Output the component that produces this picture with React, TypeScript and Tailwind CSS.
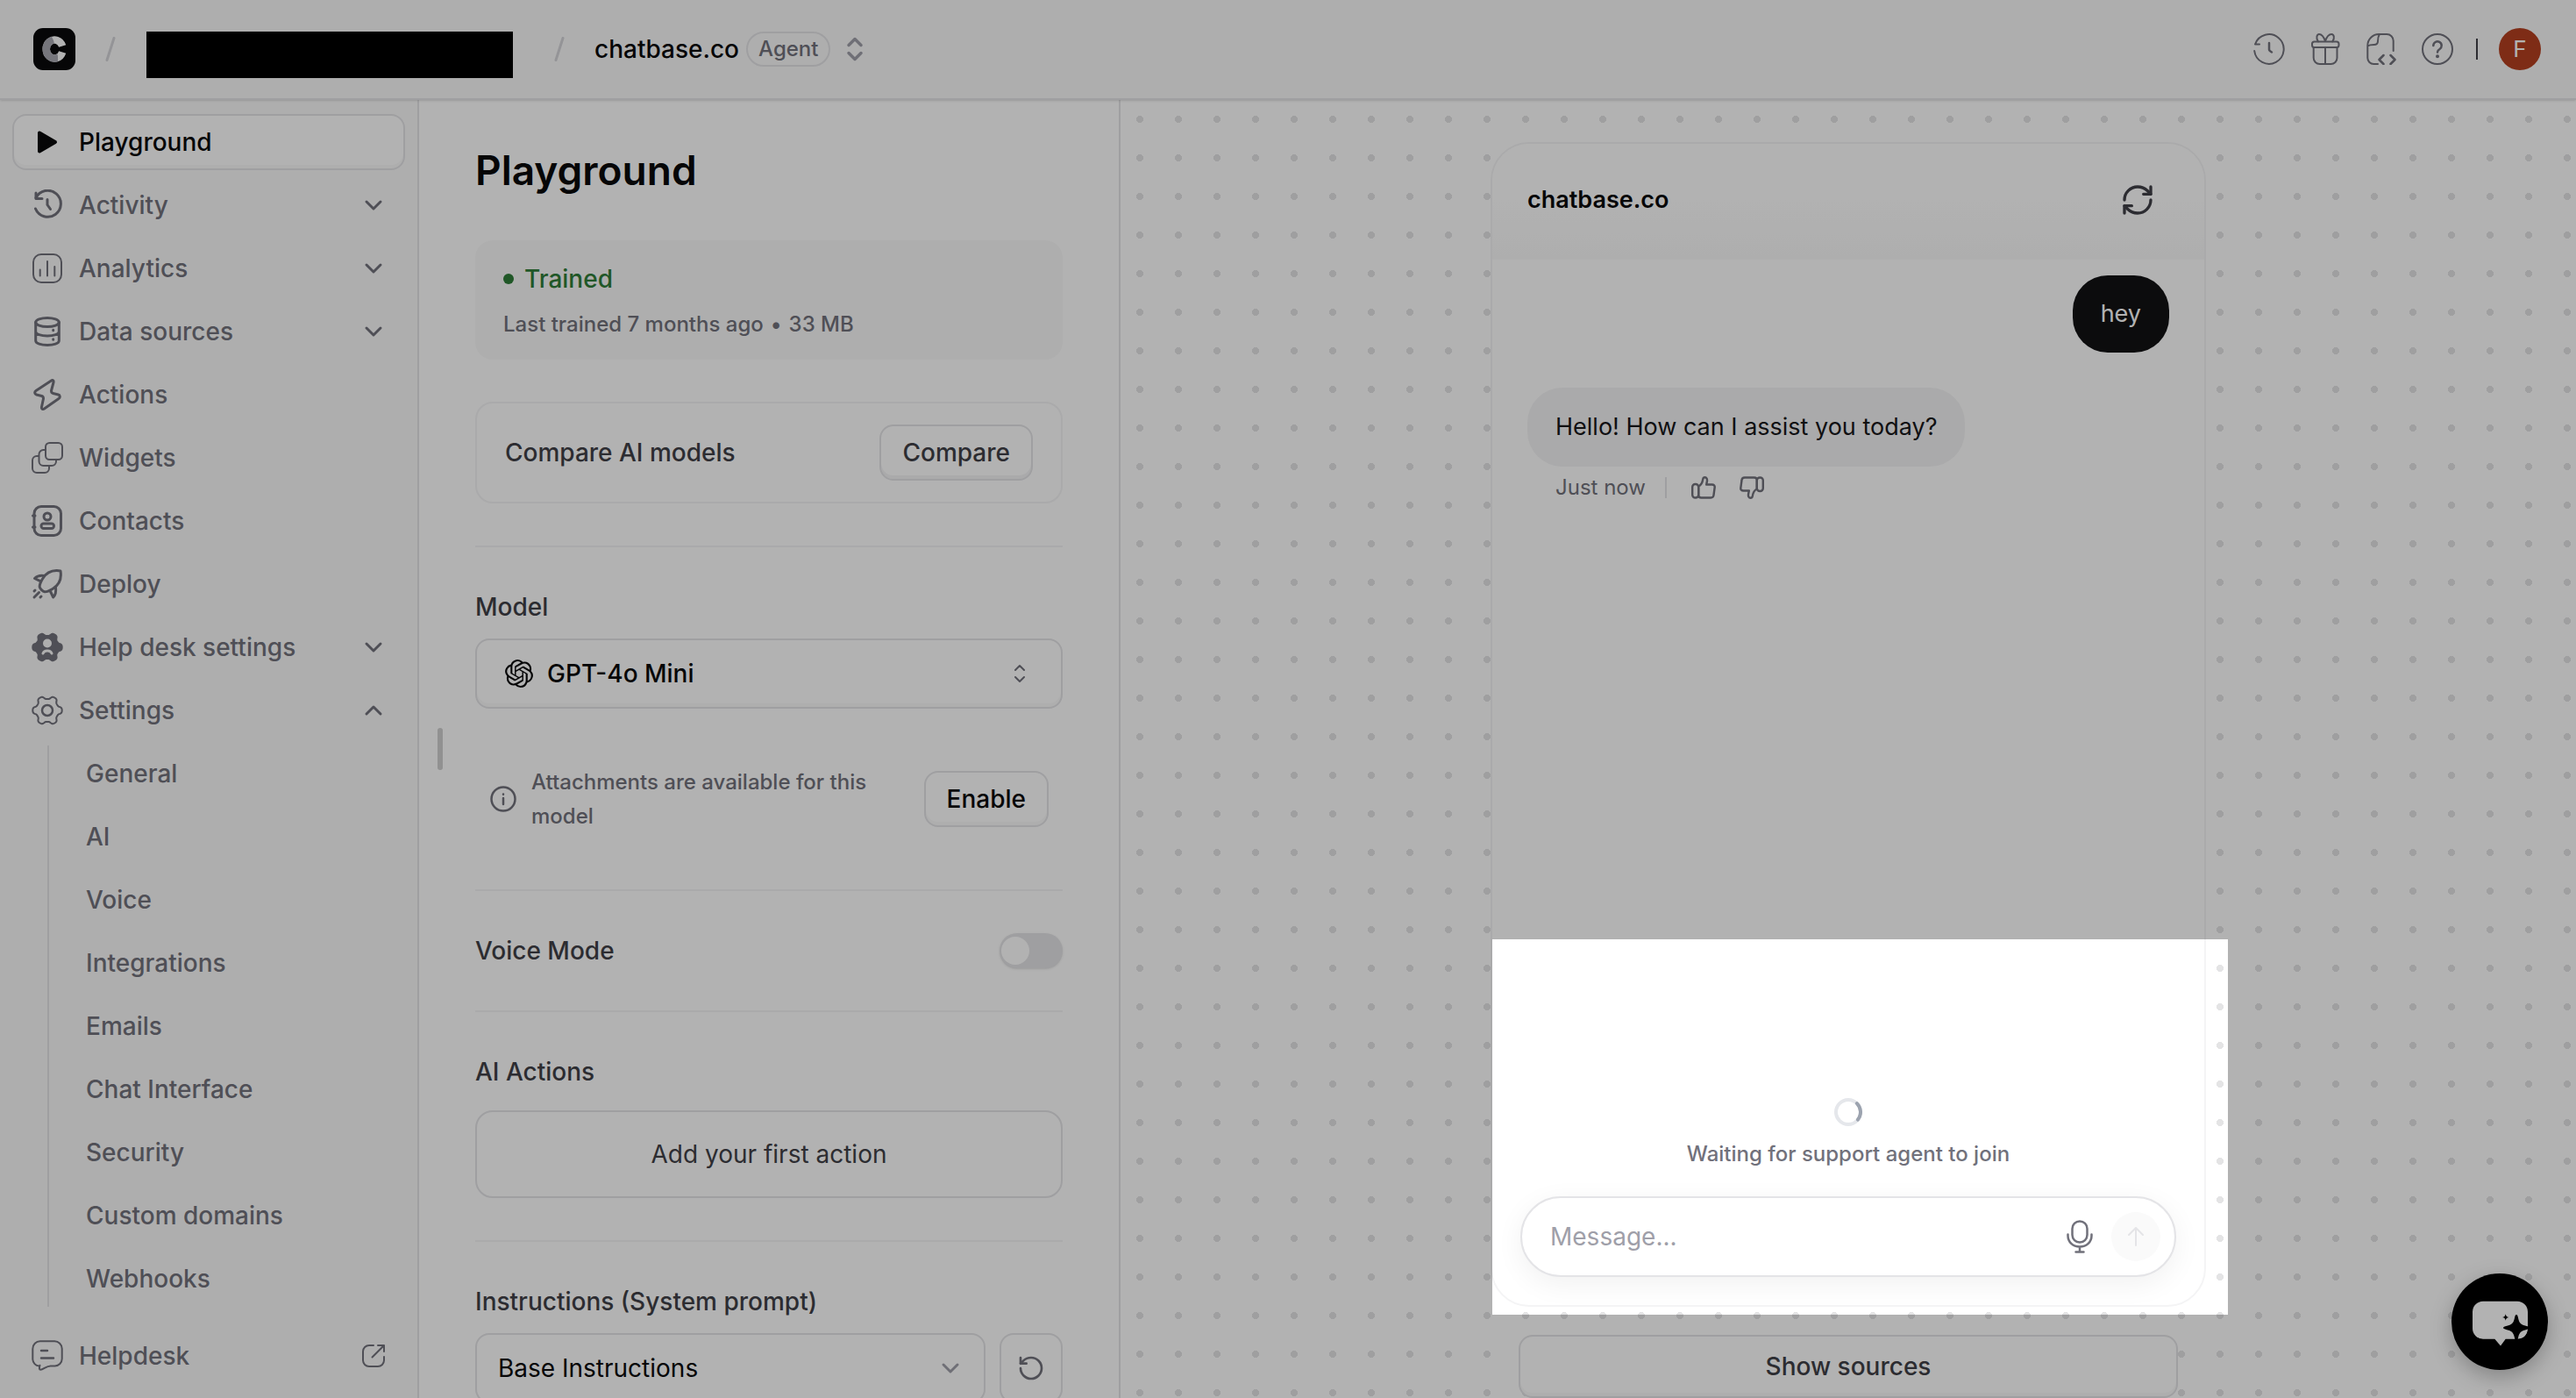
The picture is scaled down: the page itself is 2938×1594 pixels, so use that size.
import type { ReactNode } from "react";
import { RefreshCw, RotateCcw } from "lucide-react";
import { SiOpenai } from "react-icons/si";

function Icon({ size = 36, width = 3, className = "", children }: { size?: number; width?: number; className?: string; children: ReactNode }) {
  return (
    <svg
      width={size}
      height={size}
      viewBox={`0 0 ${size} ${size}`}
      fill="none"
      stroke="currentColor"
      strokeWidth={width}
      strokeLinecap="round"
      strokeLinejoin="round"
      className={`shrink-0 ${className}`}
      aria-hidden="true"
    >
      {children}
    </svg>
  );
}

/* Six-lobed gear outline around the centre of a 36px box. */
const gearPath =
  Array.from({ length: 120 }, (_, i) => {
    const a = (i / 120) * Math.PI * 2;
    const r = 14.8 + 2 * Math.tanh(1.8 * Math.cos(6 * a));
    return `${i ? "L" : "M"}${(18 + r * Math.cos(a)).toFixed(2)} ${(18 + r * Math.sin(a)).toFixed(2)}`;
  }).join("") + "Z";

const PlayIcon = () => (
  <Icon>
    <path d="M9 7.500v21l18-10.500z" fill="currentColor" strokeWidth={4} />
  </Icon>
);
const ActivityIcon = () => (
  <Icon>
    <path d="M5 9.500A15 15 0 1 1 4.500 22" />
    <path d="M5 4v6.500h7M18 11.500v6l3.500 5" />
  </Icon>
);
const AnalyticsIcon = () => (
  <Icon width={2}>
    <rect x="2" y="2" width="32" height="32" rx="9" />
    <path d="M9.700 19.500v7M18 10v16.500M26.300 16v10.500" />
  </Icon>
);
const DataIcon = () => (
  <Icon>
    <ellipse cx="18" cy="7.500" rx="13.300" ry="5" />
    <path d="M4.700 7.500v21c0 3 6 5 13.300 5s13.300-2 13.300-5v-21M4.700 18c0 3 6 5 13.300 5s13.300-2 13.300-5M24.700 16.200v.6M24.700 26.700v.6" />
  </Icon>
);
const ActionsIcon = () => (
  <Icon>
    <path d="M22.500 2 5 13.500c-2 1.300-1.500 4 .5 4.500l6 1.500c1.500.4 2 1.500 2 3L11.500 32c-.5 2.500 1.500 3 3 2L31 22.500c2-1.300 1.500-4-.5-4.500l-6-1.500c-1.500-.4-2-1.500-2-3L25 4c.5-2.500-1-3-2.500-2z" />
  </Icon>
);
const WidgetsIcon = () => (
  <Icon width={2}>
    <rect x="16" y="1" width="19" height="19" rx="4.500" />
    <path d="M16 9h-2.500a5 5 0 0 0-5 5v8a5 5 0 0 0 5 5H23a5 5 0 0 0 5-5v-2M8.500 16H6a5 5 0 0 0-5 5v9a5 5 0 0 0 5 5h9a5 5 0 0 0 5-5v-3" />
  </Icon>
);
const ContactsIcon = () => (
  <Icon>
    <rect x="3" y="1.500" width="30.500" height="33" rx="8" />
    <circle cx="18" cy="13" r="4" />
    <rect x="11" y="21" width="14.500" height="5.500" rx="2.700" />
    <path d="M1.500 12H4M1.500 25H4" />
  </Icon>
);
const DeployIcon = () => (
  <Icon>
    <path d="M33 3c-9-1.500-16 1.500-20.500 9-2.500 4.200-3.500 7-3.300 9.200.1 1.800 3.800 5.400 5.600 5.600 2.200.2 5-.8 9.200-3.300C31.500 19 34.500 12 33 3z" />
    <path d="M14 8.500C9 7.800 6 9 3.500 11.500l6.500 3.200M27.500 22c.7 5-.3 8.500-2.800 11L21.300 26M3 33l5.500-5.500M3 26l1-1M10 33l1-1" />
  </Icon>
);
const HelpDeskSettingsIcon = () => (
  <Icon width={2}>
    <path d={gearPath} fill="currentColor" />
    <circle cx="18" cy="13.500" r="4" className="fill-zinc-50 stroke-zinc-50" />
    <path d="M13 25c1.500-4 8.500-4 10 0" className="stroke-zinc-50" strokeWidth={3} />
  </Icon>
);
const SettingsIcon = () => (
  <Icon width={2}>
    <path d={gearPath} />
    <circle cx="18" cy="18" r="6" strokeWidth={2.500} />
  </Icon>
);
const HelpdeskIcon = () => (
  <Icon width={2}>
    <path d="M10 1.300h16a8.500 8.500 0 0 1 8.700 8.500v11.500a8.200 8.200 0 0 1-8 8.200h-5c-5 0-8 4-11.500 4.300-1.500 0-1.700-1.500-.7-5M8.500 29.500A8 8 0 0 1 1.300 22V10A8.500 8.500 0 0 1 10 1.300" />
    <path d="M11 12h7M11 20.500h14" strokeWidth={2.500} />
  </Icon>
);
const ExternalIcon = () => (
  <Icon size={28} width={2}>
    <path d="M14 2H9a7 7 0 0 0-7 7v10a7 7 0 0 0 7 7h10a7 7 0 0 0 7-7v-4M19 2h7v7M26 2 12.500 15.500" />
  </Icon>
);
const Chevron = ({ up = false, className = "" }: { up?: boolean; className?: string }) => (
  <Icon size={28} width={3} className={className}>
    <path d={up ? "M6 18l8-8 8 8" : "M6 10l8 8 8-8"} />
  </Icon>
);
const HistoryIcon = () => (
  <Icon width={2}>
    <path d="M2 12.500A16.800 16.800 0 1 1 1.200 20M2 12.500h5" />
    <path d="M18 11v7.500c0 1.200 1.500 2.200 3 3" strokeWidth={2.500} />
  </Icon>
);
const GiftIcon = () => (
  <Icon width={2}>
    <rect x="3" y="9.500" width="30.500" height="6.500" rx="2.500" />
    <path d="M4.700 16v12a7 7 0 0 0 7 7h12.800a7 7 0 0 0 7-7V16M18 16v19M18 9C16 3 13.500 1 11 1S7 5.500 10 9.500M18 9c2-6 4.500-8 7.200-8s4 4.500 1 8.500" />
  </Icon>
);
const DocIcon = () => (
  <Icon width={2}>
    <path d="M31.700 20V8.500A7.500 7.500 0 0 0 24.200 1H15.500A13 13 0 0 0 2.300 14v14a7 7 0 0 0 7 7H14M16 1c-1.800 2.500-2 4.500-2 8 0 3-1.500 4-4.500 4-3 0-5 0-7.200 1.500" />
    <path d="M20.500 25l-5 5 5 5M28.500 25l5 5-5 5" strokeWidth={2.500} />
  </Icon>
);
const HelpIcon = () => (
  <Icon width={2}>
    <circle cx="18" cy="18" r="17" />
    <path d="M13.300 14a4.700 4.700 0 1 1 7.200 4c-1.700 1-2.500 1.700-2.500 3.500" strokeWidth={2.500} />
    <circle cx="18" cy="26.300" r="1" fill="currentColor" />
  </Icon>
);
const InfoIcon = () => (
  <Icon size={32} width={2.500}>
    <circle cx="16" cy="16" r="13.500" />
    <path d="M16 15v7M16 10.500v.3" />
  </Icon>
);
const ThumbIcon = ({ down = false }: { down?: boolean }) => (
  <Icon size={28} width={2.400} className={down ? "rotate-180" : ""}>
    <rect x="1.200" y="10" width="7" height="15.500" rx="3.300" />
    <path d="M8.200 12.500c3-1.500 4.500-4.500 5-8 .3-1.700 1-2.300 2.300-2.300 2 0 2.700 2 2.500 4l-.8 4.300h6.500c2 0 3.200 1.200 3 3l-1.200 9c-.2 2-1.500 3-3.300 3H11.200c-1.500 0-3-1-3-3z" />
  </Icon>
);
const MicIcon = () => (
  <Icon size={40} width={2.500}>
    <rect x="11.500" y="2.500" width="17" height="24" rx="8.500" />
    <path d="M6.500 17.500v1.500c0 7 5.500 12.500 13.500 12.500S33.500 26 33.500 19v-1.500M20 31.500v6M15.500 37.500h9" />
  </Icon>
);
const UpDown = ({ small = false }: { small?: boolean }) =>
  small ? (
    <svg width="14" height="22" viewBox="0 0 14 22" fill="none" stroke="currentColor" strokeWidth="2" strokeLinecap="round" strokeLinejoin="round" className="shrink-0" aria-hidden="true">
      <path d="M2 7l5-5 5 5M2 15l5 5 5-5" />
    </svg>
  ) : (
    <svg width="20" height="28" viewBox="0 0 20 28" fill="none" stroke="currentColor" strokeWidth="3.500" strokeLinecap="round" strokeLinejoin="round" className="shrink-0" aria-hidden="true">
      <path d="M3 9.500l7-7 7 7M3 18.500l7 7 7-7" />
    </svg>
  );
const Slash = () => (
  <svg width="12" height="28" viewBox="0 0 12 28" className="shrink-0 stroke-zinc-300" strokeWidth="3" strokeLinecap="round" aria-hidden="true">
    <path d="M10 1.500 2 26.500" />
  </svg>
);
const Logo = () => (
  <svg width="48" height="48" viewBox="0 0 48 48" fill="none" aria-hidden="true">
    <defs>
      <clipPath id="logo-shade">
        <path d="M0 0h16l7 14 5 18v16H0z" />
      </clipPath>
    </defs>
    <rect width="48" height="48" rx="11" fill="#09090b" />
    <path d="M33.200 20.500a9.500 10.500 0 1 0 0 7" stroke="#fff" strokeWidth="8.500" />
    <path d="M33.200 20.500a9.500 10.500 0 1 0 0 7" stroke="#a9a9b2" strokeWidth="8.500" clipPath="url(#logo-shade)" />
  </svg>
);

type NavItem = { label: string; icon: () => ReactNode; expand?: "down" | "up"; active?: boolean };

const nav: NavItem[] = [
  { label: "Playground", icon: PlayIcon, active: true },
  { label: "Activity", icon: ActivityIcon, expand: "down" },
  { label: "Analytics", icon: AnalyticsIcon, expand: "down" },
  { label: "Data sources", icon: DataIcon, expand: "down" },
  { label: "Actions", icon: ActionsIcon },
  { label: "Widgets", icon: WidgetsIcon },
  { label: "Contacts", icon: ContactsIcon },
  { label: "Deploy", icon: DeployIcon },
  { label: "Help desk settings", icon: HelpDeskSettingsIcon, expand: "down" },
  { label: "Settings", icon: SettingsIcon, expand: "up" },
];

const settingsPages = ["General", "AI", "Voice", "Integrations", "Emails", "Chat Interface", "Security", "Custom domains", "Webhooks"];

function Header() {
  return (
    <header className="relative z-10 flex h-[114px] shrink-0 items-center border-b-2 border-zinc-200 bg-zinc-50 pr-10 pl-[38px] shadow-sm">
      <a href="#home" aria-label="Home">
        <Logo />
      </a>
      <div className="ml-[34px] flex">
        <Slash />
      </div>
      <div className="mt-9 ml-[35px] h-[53px] w-[418px] self-start bg-black" />
      <div className="ml-[47px] flex">
        <Slash />
      </div>
      <a href="#agent" className="ml-[34px] font-medium text-zinc-950">
        chatbase.co
      </a>
      <span className="ml-2 flex h-10 items-center rounded-full border-2 border-zinc-200 px-3 text-2xl font-medium text-zinc-500">Agent</span>
      <button type="button" aria-label="Switch agent" className="ml-[18px] flex text-zinc-400">
        <UpDown />
      </button>
      <div className="ml-auto flex items-center gap-7 text-zinc-500">
        <button type="button" aria-label="Changelog"><HistoryIcon /></button>
        <button type="button" aria-label="Rewards"><GiftIcon /></button>
        <button type="button" aria-label="API docs"><DocIcon /></button>
        <button type="button" aria-label="Help"><HelpIcon /></button>
      </div>
      <div className="mr-6 ml-[26px] h-6 w-0.5 bg-zinc-700" />
      <button type="button" aria-label="Account" className="flex size-12 items-center justify-center rounded-full bg-[#b54020] text-[26px] text-white">
        F
      </button>
    </header>
  );
}

function Sidebar() {
  return (
    <nav className="flex w-[478px] shrink-0 flex-col border-r-2 border-zinc-200 bg-zinc-50 px-[14px] py-4 font-medium text-zinc-500">
      <ul className="flex flex-col gap-2">
        {nav.map(({ label, icon: Glyph, expand, active }) => (
          <li key={label}>
            <a
              href="#nav"
              aria-current={active ? "page" : undefined}
              className={
                active
                  ? "flex h-16 items-center gap-[18px] rounded-2xl border-2 border-zinc-200 bg-white px-5 text-zinc-950 shadow-[inset_0_-4px_0_#fafafa]"
                  : "flex h-16 items-center gap-[18px] rounded-2xl border-2 border-transparent px-5"
              }
            >
              <Glyph />
              <span className="flex-1">{label}</span>
              {expand && <Chevron up={expand === "up"} />}
            </a>
          </li>
        ))}
      </ul>
      <ul className="mt-2 ml-10 flex flex-col gap-2 border-l-2 border-zinc-200 pl-[42px]">
        {settingsPages.map((label) => (
          <li key={label}>
            <a href="#settings" className="flex h-16 items-center">
              {label}
            </a>
          </li>
        ))}
      </ul>
      <a href="#helpdesk" className="mt-auto flex h-16 items-center gap-[18px] px-[22px]">
        <HelpdeskIcon />
        <span className="flex-1">Helpdesk</span>
        <ExternalIcon />
      </a>
    </nav>
  );
}

const Rule = () => <hr className="my-12 border-t-2 border-zinc-100" />;

function ConfigPanel() {
  return (
    <section className="flex w-[800px] shrink-0 overflow-hidden border-r-2 border-zinc-200 bg-white text-zinc-700">
      <div className="flex w-16 shrink-0 items-center pl-[21px]">
        <div className="h-12 w-1.5 rounded-full bg-[#d0d0d0]" />
      </div>
      <div className="min-w-0 flex-1 pt-12 pr-16 font-medium">
        <h1 className="text-[46px]/[64px] font-semibold text-zinc-950">Playground</h1>

        <div className="mt-12 rounded-[20px] bg-zinc-50 px-8 py-6">
          <p className="flex items-center gap-3 text-[#2e7d38]">
            <span className="size-3 rounded-full bg-[#2e7d38]" />
            Trained
          </p>
          <p className="mt-4 flex gap-2 text-2xl text-zinc-500">
            <span>Last trained 7 months ago</span>
            <span>•</span>
            <span>33 MB</span>
          </p>
        </div>

        <div className="mt-12 flex items-center justify-between rounded-[20px] border-2 border-zinc-100 px-8 py-6">
          <span>Compare AI models</span>
          <button type="button" className="h-16 rounded-2xl border-2 border-zinc-200 px-6 shadow-[inset_0_-4px_0_#f4f4f5]">
            Compare
          </button>
        </div>

        <Rule />

        <label htmlFor="model" className="block">Model</label>
        <div className="mt-4 flex h-20 items-center rounded-2xl border-2 border-zinc-200 pr-10 pl-8 text-zinc-950 shadow-[inset_0_-4px_0_#fafafa]">
          <SiOpenai className="size-8 shrink-0" />
          <select id="model" className="ml-4 flex-1 appearance-none bg-transparent">
            <option>GPT-4o Mini</option>
          </select>
          <span className="flex text-zinc-500"><UpDown small /></span>
        </div>

        <div className="mt-12 flex items-center p-4 text-zinc-500">
          <InfoIcon />
          <p className="ml-4 flex-1 text-2xl/[39px]">Attachments are available for this model</p>
          <button type="button" className="ml-4 h-16 rounded-2xl border-2 border-zinc-200 px-6 text-zinc-950 shadow-[inset_0_-4px_0_#fafafa]">
            Enable
          </button>
        </div>

        <Rule />

        <div className="flex items-center justify-between">
          <label htmlFor="voice">Voice Mode</label>
          <input
            id="voice"
            type="checkbox"
            role="switch"
            className="h-10 w-[72px] appearance-none rounded-full bg-zinc-200 p-1 pl-0.5 shadow-sm before:block before:size-8 before:rounded-full before:bg-white"
          />
        </div>

        <Rule />

        <h2>AI Actions</h2>
        <button type="button" className="mt-6 h-[100px] w-full rounded-[20px] border-2 border-zinc-200 font-normal">
          Add your first action
        </button>

        <Rule />

        <label htmlFor="prompt" className="block">Instructions (System prompt)</label>
        <div className="mt-4 flex gap-4">
          <div className="flex h-20 flex-1 items-center rounded-2xl border-2 border-zinc-200 px-6 text-zinc-950">
            <select id="prompt" className="flex-1 appearance-none bg-transparent font-normal">
              <option>Base Instructions</option>
            </select>
            <Chevron className="text-zinc-400" />
          </div>
          <button type="button" aria-label="Reset" className="flex h-20 w-[72px] items-center justify-center rounded-2xl border-2 border-zinc-200 text-zinc-500">
            <RotateCcw size={32} strokeWidth={2} />
          </button>
        </div>
      </div>
    </section>
  );
}

function ChatWindow() {
  return (
    <section className="relative flex w-full max-w-[816px] flex-1 flex-col rounded-[44px] border-2 border-zinc-100 bg-white">
      <header className="flex h-[132px] shrink-0 items-center justify-between rounded-t-[42px] border-b-4 border-zinc-50 bg-linear-to-b from-white via-white to-zinc-50 pr-14 pl-10">
        <h2 className="text-[27px] font-semibold text-zinc-950">chatbase.co</h2>
        <button type="button" aria-label="Restart chat" className="text-zinc-700">
          <RefreshCw size={40} strokeWidth={2} />
        </button>
      </header>

      <div className="flex flex-1 flex-col px-10 pt-[18px] text-[27px]">
        <p className="flex h-[88px] items-center self-end rounded-[40px] bg-[#121214] px-8 text-white">hey</p>
        <p className="mt-10 flex h-[90px] items-center self-start rounded-[40px] bg-zinc-100 px-8 text-[#18181b]">Hello! How can I assist you today?</p>
        <div className="mt-2 flex items-center pl-8 text-2xl text-zinc-500">
          <span>Just now</span>
          <span className="mr-7 ml-[22px] h-6 w-0.5 bg-zinc-200" />
          <button type="button" aria-label="Good answer"><ThumbIcon /></button>
          <button type="button" aria-label="Bad answer" className="ml-[27px]"><ThumbIcon down /></button>
        </div>
      </div>

      <div className="flex flex-col items-center px-8 pb-8">
        <svg width="32" height="32" viewBox="0 0 32 32" fill="none" strokeWidth="4" role="img" aria-label="Loading">
          <circle cx="16" cy="16" r="14" stroke="#e5e7eb" />
          <path d="M25.900 6.100a14 14 0 0 1 1.100 18.500" stroke="#9ca3af" strokeLinecap="round" />
        </svg>
        <p className="mt-4 text-2xl font-medium text-zinc-500">Waiting for support agent to join</p>
        <form className="mt-8 flex h-[92px] w-full items-center rounded-full border-2 border-zinc-200 bg-white pr-4 pl-8 shadow-[0_8px_32px_rgba(0,0,0,0.06)]">
          <input type="text" aria-label="Message" placeholder="Message..." className="min-w-0 flex-1 bg-transparent outline-none placeholder:text-zinc-400" />
          <button type="button" aria-label="Record voice" className="text-zinc-500">
            <MicIcon />
          </button>
          <button type="submit" aria-label="Send" className="ml-4 flex size-14 items-center justify-center rounded-full bg-zinc-50 text-zinc-200">
            <Icon size={28} width={2}>
              <path d="M14 24V4M6 12l8-8 8 8" />
            </Icon>
          </button>
        </form>
      </div>

      {/* Highlighted area: its spread shadow dims the rest of the window. */}
      <div className="pointer-events-none absolute -right-[27px] -bottom-[11px] left-0 z-50 h-[428px] shadow-[0_0_0_4000px_rgba(0,0,0,0.3)]" />
    </section>
  );
}

export default function App() {
  return (
    <div className="relative flex h-screen flex-col overflow-hidden bg-white font-[Inter,sans-serif] text-[28px]/[40px]">
      <Header />
      <div className="flex min-h-0 flex-1">
        <Sidebar />
        <ConfigPanel />
        <main className="flex min-w-0 flex-1 flex-col items-center bg-[radial-gradient(circle,#e4e4e5_4px,transparent_4px)] bg-size-[44px_44px] pt-12">
          <ChatWindow />
          <button type="button" className="mt-8 h-[72px] w-full max-w-[752px] rounded-2xl border-2 border-zinc-200 bg-white font-medium text-zinc-700 shadow-[inset_0_-4px_0_#fafafa]">
            Show sources
          </button>
        </main>
      </div>
      <button type="button" aria-label="Open assistant" className="absolute right-8 bottom-8 z-20 rounded-full bg-black shadow-[0_8px_24px_rgba(0,0,0,0.25)]">
        <svg width="110" height="110" viewBox="0 0 110 110" aria-hidden="true">
          <path d="M36 31.700h39a12 12 0 0 1 12 12v19a12 12 0 0 1-12 12H61.700L56 82.500l-6.700-7.800H36a12 12 0 0 1-12-12v-19a12 12 0 0 1 12-12z" fill="#fff" />
          <path d="M74 47c1 0 1.500 1 2 3.500 1 5 2.500 7.500 7 8.800 4 1 6 1.700 6 2.700s-2 1.700-6 2.700c-4.500 1.300-6 3.800-7 8.800-.5 2.500-1 3.500-2 3.500s-1.500-1-2-3.500c-1-5-2.500-7.500-7-8.800-4-1-6-1.700-6-2.700s2-1.700 6-2.700c4.500-1.300 6-3.800 7-8.800.5-2.500 1-3.500 2-3.500z" fill="#000" />
          <path d="M61.700 46.300c.6 2.500 1 3 3.600 3.700-2.600.7-3 1.200-3.600 3.700-.6-2.500-1-3-3.600-3.700 2.600-.7 3-1.200 3.600-3.700z" fill="#000" />
          <path d="M77 74c1-3.500 4-6 9-7.500-1 4-4 7.500-9 7.500z" fill="#fff" />
        </svg>
      </button>
    </div>
  );
}
